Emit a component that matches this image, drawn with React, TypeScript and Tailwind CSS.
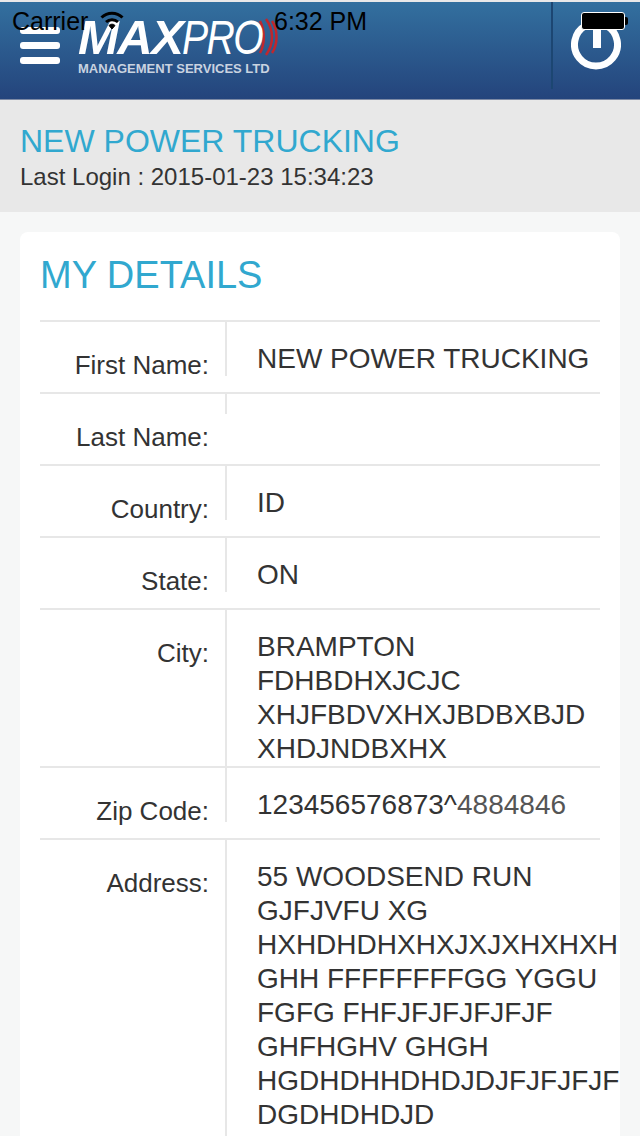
const rows = [
  { label: 'First Name:', lines: ['NEW POWER TRUCKING'] },
  { label: 'Last Name:', lines: [] },
  { label: 'Country:', lines: ['ID'] },
  { label: 'State:', lines: ['ON'] },
  { label: 'City:', lines: ['BRAMPTON', 'FDHBDHXJCJC', 'XHJFBDVXHXJBDBXBJD', 'XHDJNDBXHX'] },
  { label: 'Zip Code:', lines: ['123456576873^'], tail: '4884846' },
  {
    label: 'Address:',
    lines: [
      '55 WOODSEND RUN',
      'GJFJVFU XG',
      'HXHDHDHXHXJXJXHXHXH',
      'GHH FFFFFFFFGG YGGU',
      'FGFG FHFJFJFJFJFJF',
      'GHFHGHV GHGH',
      'HGDHDHHDHDJDJFJFJFJF',
      'DGDHDHDJD',
    ],
  },
];

const StatusBar = () => (
  <div className="absolute left-0 top-0 w-full h-[38px] text-[25px] leading-[38px] text-black">
    <span className="absolute left-[12px] top-0">Carrier</span>
    <svg className="absolute left-[100px] top-[8px]" width="24" height="20" viewBox="0 0 24 20" fill="none" stroke="#000" strokeWidth="3">
      <path d="M1.500 7.500a15 15 0 0 1 21 0" />
      <path d="M6 12a9 9 0 0 1 12 0" />
      <path d="M9 15.500l3 3.500 3-3.500a4 4 0 0 0-6 0z" fill="#000" strokeWidth="1" />
    </svg>
    <span className="absolute left-[274px] top-0">6:32 PM</span>
    <div className="absolute left-[581px] top-[10px] w-[44px] h-[18px] bg-black rounded-[3px] border border-white" />
    <div className="absolute left-[625px] top-[15px] w-[3px] h-[8px] bg-black rounded-r-[2px]" />
  </div>
);

const Logo = () => (
  <div className="ml-[18px] mt-[-10px] w-[210px] text-white">
    <div className="flex h-[44px] mb-[3px] items-center italic">
      <span className="text-[49px] leading-[44px] font-bold tracking-[-1.500px]">MAX</span>
      <span className="w-[76px] origin-left scale-x-[0.8] text-[49px] leading-[44px] tracking-[-2px]">PRO</span>
      <svg className="shrink-0" width="22" height="38" viewBox="0 0 22 38" fill="none" stroke="#c0272d" strokeWidth="2.500">
        <path d="M2 3c5 9 5 23 0 32" />
        <path d="M8 1c8 11 8 25 0 36" />
        <path d="M14 3c6 9 6 23 0 32" />
      </svg>
    </div>
    <div className="text-[13px] font-bold leading-[14px] text-[#c9d3e0] whitespace-nowrap">MANAGEMENT SERVICES LTD</div>
  </div>
);

const Header = () => (
  <header className="relative h-[100px] border-t-2 border-b border-t-[#e9e9e9] border-b-[#7d8aa5] bg-gradient-to-b from-[#33709f] to-[#24447c]">
    <div className="flex h-full items-center">
      <div className="flex flex-col gap-[8px] ml-[20px] mt-[-11px] w-[40px]">
        <div className="h-[7px] rounded-[3px] bg-white" />
        <div className="h-[7px] rounded-[3px] bg-white" />
        <div className="h-[7px] rounded-[3px] bg-white" />
      </div>
      <Logo />
      <div className="ml-auto h-[87px] w-[2px] self-start bg-[#1c4672]" />
      <div className="flex w-[87px] self-start justify-center pt-[18px] pr-[2px]">
        <svg width="50" height="50" viewBox="0 0 50 50" fill="none" stroke="#fff">
          <path d="M15 5.500a21.500 21.500 0 1 0 20 0" strokeWidth="7" />
          <path d="M26 2v26" strokeWidth="8" />
        </svg>
      </div>
    </div>
    <StatusBar />
  </header>
);

const App = () => (
  <div className="relative h-[1136px] overflow-hidden bg-[#f6f7f7] font-['Liberation_Sans',sans-serif] text-[#333]">
    <Header />
    <div className="h-[112px] bg-[#e8e8e8] px-[20px] pt-[22px]">
      <div className="text-[32px] leading-[38px] text-[#31a8cf]">NEW POWER TRUCKING</div>
      <div className="text-[24px] leading-[34px]">Last Login : 2015-01-23 15:34:23</div>
    </div>
    <main className="mx-[20px] mt-[20px] rounded-t-[8px] bg-white px-[20px] pt-[20px]">
      <h1 className="h-[68px] text-[38px] leading-[46px] text-[#31a8cf]">MY DETAILS</h1>
      {rows.map(row => (
        <div key={row.label} className="flex min-h-[72px] items-start border-t-2 border-[#e7e7e7]">
          <div className="w-[185px] shrink-0 pt-[26px] pr-[16px] text-right text-[26px] leading-[34px]">{row.label}</div>
          <div className={`border-l-2 border-[#e7e7e7] pl-[30px] pt-[20px] text-[28px] leading-[34px] whitespace-nowrap ${row.label === 'Address:' ? 'pb-[20px]' : ''}`}>
            {row.lines.map(line => (
              <div key={line}>
                {line}
                {row.tail && <span className="text-[#555]">{row.tail}</span>}
              </div>
            ))}
          </div>
        </div>
      ))}
    </main>
  </div>
);

export default App;
